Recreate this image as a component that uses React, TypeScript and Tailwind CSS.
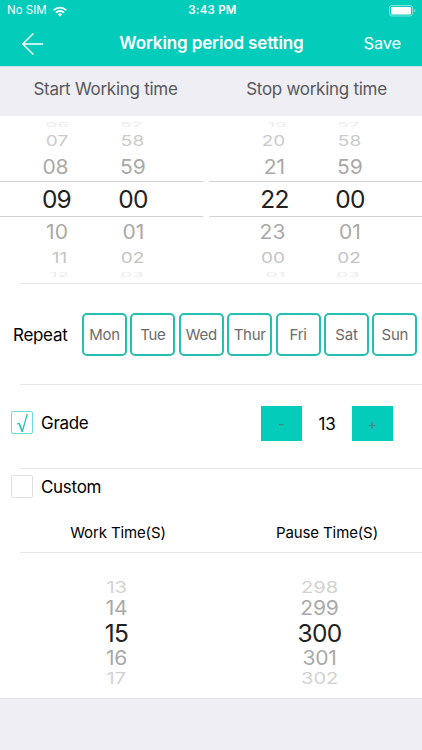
interface WheelRow {
    value: string
    shift?: number
}

interface WheelProps {
    rows: WheelRow[]
    center: number
}

const DAYS = ['Mon', 'Tue', 'Wed', 'Thur', 'Fri', 'Sat', 'Sun']

const startHours: WheelRow[] = [
    { value: '06', shift: 1 },
    { value: '07', shift: 0.5 },
    { value: '08', shift: -1 },
    { value: '09', shift: 0 },
    { value: '10', shift: 0.5 },
    { value: '11', shift: 3 },
    { value: '12', shift: 3 },
]

const startMinutes: WheelRow[] = [
    { value: '57', shift: -1.5 },
    { value: '58', shift: -0.5 },
    { value: '59' },
    { value: '00', shift: 0 },
    { value: '01', shift: 0.5 },
    { value: '02', shift: -0.5 },
    { value: '03', shift: -1 },
]

const stopHours: WheelRow[] = [
    { value: '19', shift: 2.5 },
    { value: '20', shift: -1 },
    { value: '21' },
    { value: '22', shift: 0 },
    { value: '23', shift: -2 },
    { value: '00', shift: -1.5 },
    { value: '01', shift: 1 },
]

const stopMinutes: WheelRow[] = [
    { value: '57', shift: -1.5 },
    { value: '58', shift: -0.5 },
    { value: '59' },
    { value: '00', shift: 0 },
    { value: '01' },
    { value: '02', shift: -1 },
    { value: '03', shift: -2 },
]

const TIME_ROWS = [
    'h-4 pt-px text-[19px] text-[#ececec]',
    'h-[17px] pt-px text-[19px] text-[#cbcbcb]',
    'h-8 pt-[3px] text-[21px] text-[#a9a9a9]',
    'h-9 text-[24.5px] tracking-[-0.8px] text-[#222]',
    'h-[29px] text-[21px] text-[#a9a9a9]',
    'h-[22px] pt-[2px] text-[19px] text-[#c4c4c4]',
    'h-3 text-[19px] text-[#ececec]',
]

const TIME_SCALES = [
    'scale-y-[0.36]',
    'scale-y-[0.76]',
    'scale-y-[0.95]',
    '',
    'scale-y-[0.95]',
    'scale-y-[0.76]',
    'scale-y-[0.36]',
]

const SECOND_ROWS = [
    'h-[19px] text-[19px] text-[#d2d2d2]',
    'h-[23px] text-[21px] tracking-[-0.2px] text-[#a9a9a9]',
    'h-[27px] text-[24.5px] tracking-[-0.6px] text-[#222]',
    'h-[23px] text-[21px] tracking-[-0.2px] text-[#a9a9a9]',
    'h-[18px] text-[19px] text-[#d2d2d2]',
]

const SECOND_SCALES = ['scale-x-[1.06] scale-y-[0.8]', 'scale-y-[0.95]', '', 'scale-y-[0.95]', 'scale-x-[1.06] scale-y-[0.8]']

function TimeWheel({ rows, center }: WheelProps) {
    return (
        <div className="w-20 shrink-0" style={{ marginLeft: center - 40 }}>
            {rows.map((row, i) => (
                <div key={row.value} className={`flex items-center justify-center leading-none ${TIME_ROWS[i]}`}>
                    <span className={TIME_SCALES[i]} style={{ marginLeft: (row.shift ?? 0) * 2 }}>
                        {row.value}
                    </span>
                </div>
            ))}
        </div>
    )
}

function TimePicker({ hours, minutes, centers }: { hours: WheelRow[]; minutes: WheelRow[]; centers: [number, number] }) {
    return (
        <div className="relative flex h-[164px] overflow-hidden">
            <div className="absolute inset-x-0 top-[65px] h-9 border-y border-[#d3d3d3]" />
            <TimeWheel rows={hours} center={centers[0]} />
            <TimeWheel rows={minutes} center={centers[1] - centers[0] - 40} />
        </div>
    )
}

function SecondsWheel({ values }: { values: string[] }) {
    return (
        <div>
            {values.map((value, i) => (
                <div key={value} className={`flex items-center justify-center leading-[0.9] ${SECOND_ROWS[i]}`}>
                    <span className={SECOND_SCALES[i]}>{value}</span>
                </div>
            ))}
        </div>
    )
}

function StatusBar() {
    return (
        <div className="flex h-[22px] items-center justify-between pl-[7px] pr-[6px] text-[11.5px] leading-none">
            <div className="flex w-[170px] items-center gap-[6px]">
                <span>No SIM</span>
                <svg width="14" height="11" viewBox="0 0 14 11" fill="none" stroke="currentColor">
                    <path d="M.8 4.1a8.9 8.9 0 0 1 12.4 0" strokeWidth="1.9" />
                    <path d="M3 6.6a5.8 5.8 0 0 1 8 0" strokeWidth="1.8" />
                    <path d="M7 10.6 4.8 8.4a3.2 3.2 0 0 1 4.4 0Z" fill="currentColor" stroke="none" />
                </svg>
            </div>
            <span className="pl-[2px] font-semibold tracking-[0.2px] whitespace-nowrap">3:43 PM</span>
            <div className="flex w-[170px] justify-end">
                <svg width="27" height="12" viewBox="0 0 27 12" fill="none">
                    <rect x="0.5" y="0.5" width="23" height="10.5" rx="2.5" stroke="white" strokeOpacity="0.5" />
                    <rect x="2" y="2" width="20" height="7.5" rx="1.2" fill="white" />
                    <path d="M25 4v3.6c.8-.3 1.3-1 1.3-1.8S25.8 4.3 25 4Z" fill="white" fillOpacity="0.5" />
                </svg>
            </div>
        </div>
    )
}

export default function App() {
    return (
        <div className="flex h-[750px] w-[422px] flex-col overflow-hidden bg-[#efeef4] font-['Inter',sans-serif] text-black">
            <header className="h-[66px] shrink-0 bg-[#04ccbb] text-white">
                <StatusBar />
                <div className="flex h-11 items-center justify-between pl-[22px] pr-[21px]">
                    <button className="w-[60px]" aria-label="Back">
                        <svg width="22" height="22" viewBox="0 0 22 22" fill="none" stroke="currentColor" strokeWidth="1.3">
                            <path d="M11.5.5.8 11l10.7 10.5M.8 11H21.2" />
                        </svg>
                    </button>
                    <h1 className="pb-px text-[17px] font-semibold tracking-[-0.12px] whitespace-nowrap">Working period setting</h1>
                    <button className="w-[60px] pb-px text-right text-[16.5px] tracking-[-0.2px]">Save</button>
                </div>
            </header>

            <div className="grid h-[50px] shrink-0 grid-cols-2 items-center border-t border-[#c9dfe2] pb-[3px] text-center text-[17px] tracking-[-0.27px] text-[#58585c]">
                <span>Start Working time</span>
                <span>Stop working time</span>
            </div>

            <main className="h-[582px] shrink-0 bg-white">
                <div className="flex h-[167px] justify-between">
                    <div className="w-[203px]">
                        <TimePicker hours={startHours} minutes={startMinutes} centers={[56.5, 133]} />
                    </div>
                    <div className="w-[213px]">
                        <TimePicker hours={stopHours} minutes={stopMinutes} centers={[65.5, 141]} />
                    </div>
                </div>

                <section className="ml-5 h-[101px] border-t border-[#e6e6e6] pt-[29px]">
                    <div className="-ml-5 flex items-center pl-[13px]">
                        <span className="w-[69px] pt-[2px] text-[17px] tracking-[-0.3px]">Repeat</span>
                        <div className="flex gap-[3.4px]">
                            {DAYS.map(day => (
                                <button
                                    key={day}
                                    className="h-[43px] w-[45px] rounded-[5px] border-2 border-[#25bfb1] pt-px text-[15px] tracking-[-0.25px] text-[#6b6b6b]"
                                >
                                    {day}
                                </button>
                            ))}
                        </div>
                    </div>
                </section>

                <section className="ml-5 h-[84px] border-t border-[#e6e6e6] pt-[21px]">
                    <div className="-ml-5 flex h-[35px] items-center pl-[11px]">
                        <span className="mb-[2px] flex h-[23px] w-[22px] items-center justify-center rounded-[2px] border border-[#6fddd3]">
                            <svg width="13" height="20" viewBox="0 0 13 20" fill="none" stroke="#25bfb1">
                                <path d="M.8 11.2 3 10" strokeWidth="1" />
                                <path d="M3 10 6.2 18.5" strokeWidth="1.7" />
                                <path d="M6.2 19 11.3 1" strokeWidth="1.2" />
                            </svg>
                        </span>
                        <span className="ml-2 w-[220px] text-[17px] tracking-[-0.3px]">Grade</span>
                        <button className="h-[35px] w-[41px] bg-[#04ccbb] text-[14px] text-[#50807a]">-</button>
                        <span className="w-[50px] pt-[2px] text-center text-[17px] tracking-[-0.2px]">13</span>
                        <button className="h-[35px] w-[41px] bg-[#04ccbb] text-[14px] text-[#50807a]">+</button>
                    </div>
                </section>

                <section className="ml-5 h-[84px] border-t border-[#e6e6e6] pt-[5px]">
                    <div className="-ml-5 flex h-[25px] items-center pl-[11px]">
                        <span className="mb-px h-[23px] w-[22px] rounded-[2px] border border-[#dedede]" />
                        <span className="ml-2 pt-[2px] text-[17px] tracking-[-0.3px]">Custom</span>
                    </div>
                    <div className="-ml-5 grid grid-cols-[209px_209px] pt-[23px] pl-[13.5px] text-center text-[15px] leading-[22px] tracking-[-0.12px]">
                        <span>Work Time(S)</span>
                        <span>Pause Time(S)</span>
                    </div>
                </section>

                <section className="ml-5 border-t border-[#e6e6e6] pt-[25px]">
                    <div className="-ml-5 grid grid-cols-[203px_203px] pl-[15px]">
                        <SecondsWheel values={['13', '14', '15', '16', '17']} />
                        <SecondsWheel values={['298', '299', '300', '301', '302']} />
                    </div>
                </section>
            </main>
            <div className="border-t border-[#e2e1e6]" />
        </div>
    )
}
